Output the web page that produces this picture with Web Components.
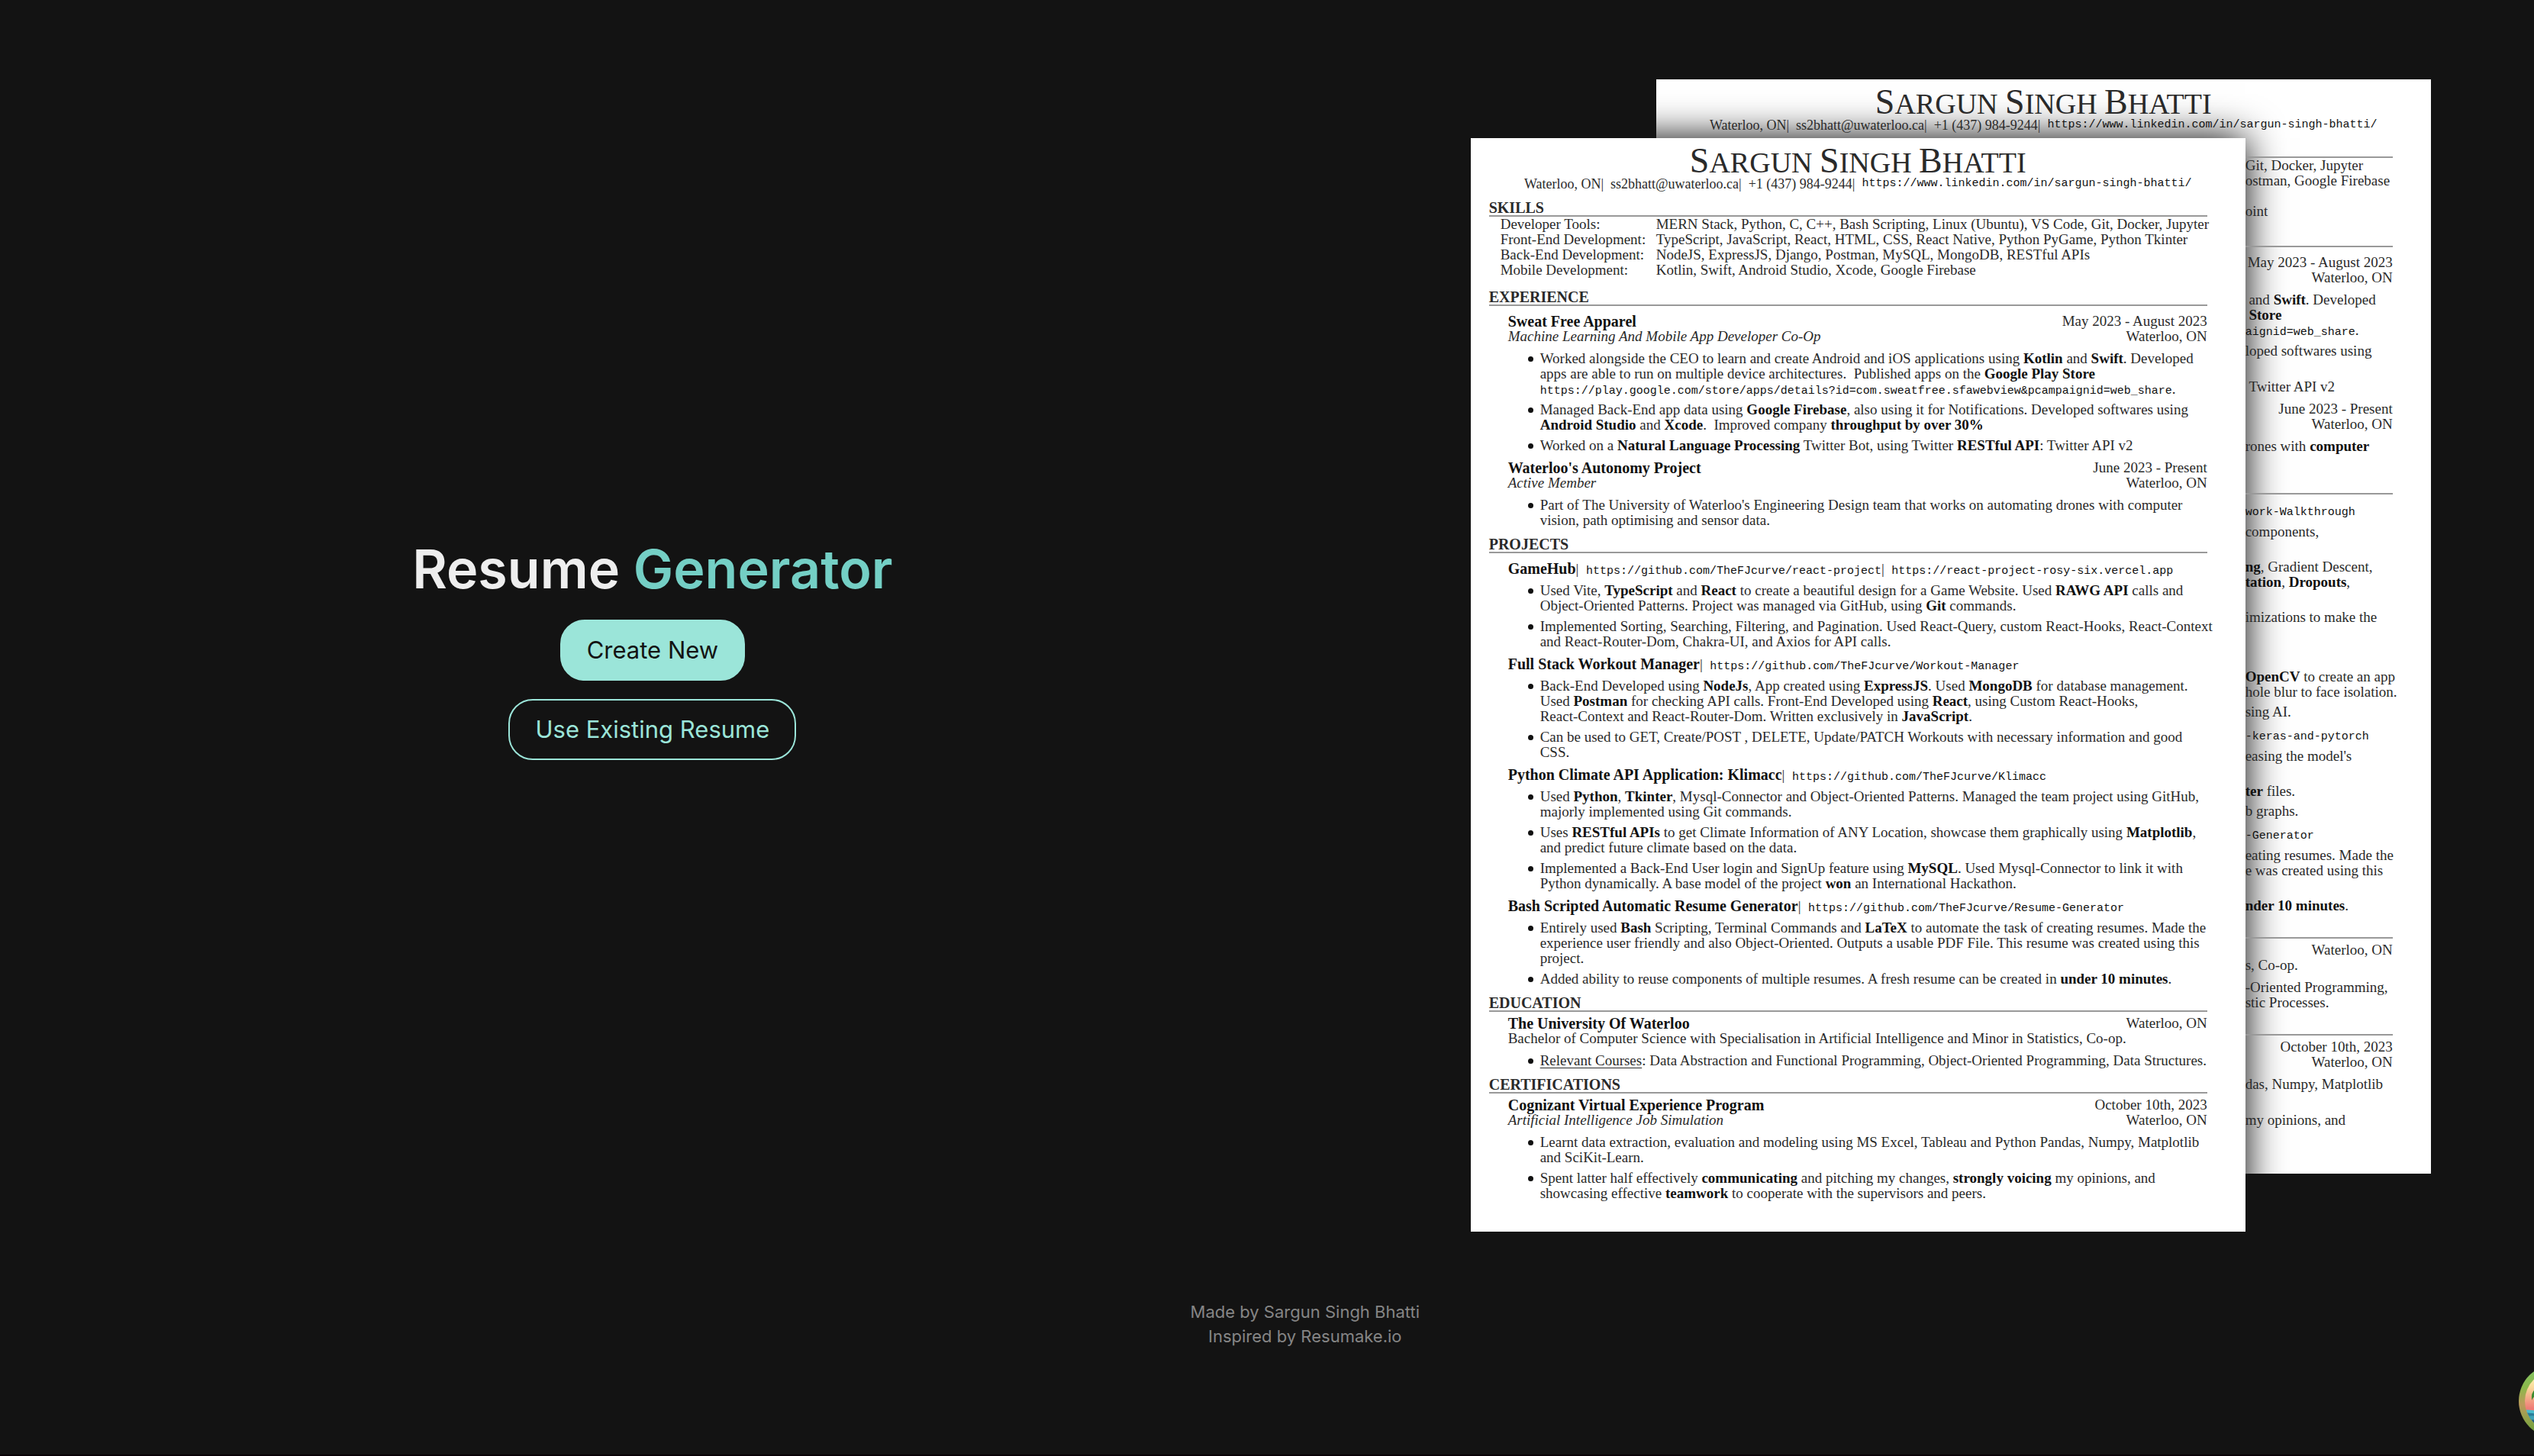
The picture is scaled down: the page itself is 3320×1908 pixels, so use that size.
<!DOCTYPE html>
<html lang="en">
<head>
<meta charset="utf-8">
<title>Resume Generator</title>
<style>
  html, body { margin: 0; height: 100%; background: #131313; }
  body { overflow: hidden; font-family: Inter, "Liberation Sans", sans-serif; }
  resume-sheet a { color: #111; text-decoration: none; font: 15px/1 "Liberation Mono", monospace; }
  resume-sheet u { text-underline-offset: 3px; }
  resume-sheet b { color: #111; }
</style>
</head>
<body>
<landing-page>
  <hero-panel slot="intro" lead="Resume" accent="Generator">
    <pill-button variant="solid">Create New</pill-button>
    <pill-button variant="outline">Use Existing Resume</pill-button>
  </hero-panel>

  <sheet-stack slot="preview">
    <resume-sheet slot="back" class="covered">
      <resume-section>
        <skill-row>Git, Docker, Jupyter</skill-row>
        <skill-row>ostman, Google Firebase</skill-row>
        <skill-row>&nbsp;</skill-row>
        <skill-row>oint</skill-row>
      </resume-section>
      <resume-section roomy>
        <resume-entry><span slot="date">May 2023 - August 2023</span><span slot="place">Waterloo, ON</span>
          <resume-point>&nbsp;and <b>Swift</b>. Developed<br>&nbsp;<b>Store</b><br><a>aignid=web_share</a>.</resume-point>
          <resume-point>loped softwares using<br>&nbsp;</resume-point>
          <resume-point>&nbsp;Twitter API v2</resume-point>
        </resume-entry>
        <resume-entry><span slot="date">June 2023 - Present</span><span slot="place">Waterloo, ON</span>
          <resume-point>rones with <b>computer</b><br>&nbsp;</resume-point>
        </resume-entry>
      </resume-section>
      <resume-section roomy dense>
        <resume-entry single><span slot="title"><a>work-Walkthrough</a></span>
          <resume-point>components,<br>&nbsp;</resume-point>
          <resume-point><b>ng</b>, Gradient Descent,<br><b>tation</b>, <b>Dropouts</b>,<br>&nbsp;</resume-point>
          <resume-point>imizations to make the<br>&nbsp;</resume-point>
        </resume-entry>
        <resume-entry single><span slot="title">&nbsp;</span>
          <resume-point><b>OpenCV</b> to create an app<br>hole blur to face isolation.</resume-point>
          <resume-point>sing AI.</resume-point>
        </resume-entry>
        <resume-entry single><span slot="title"><a>-keras-and-pytorch</a></span>
          <resume-point>easing the model's<br>&nbsp;</resume-point>
          <resume-point><b>ter</b> files.</resume-point>
          <resume-point>b graphs.</resume-point>
        </resume-entry>
        <resume-entry single><span slot="title"><a>-Generator</a></span>
          <resume-point>eating resumes. Made the<br>e was created using this<br>&nbsp;</resume-point>
          <resume-point><b>nder 10 minutes</b>.</resume-point>
        </resume-entry>
      </resume-section>
      <resume-section>
        <resume-entry plain><span slot="date">Waterloo, ON</span><span slot="subtitle">s, Co-op.</span>
          <resume-point>-Oriented Programming,<br>stic Processes.</resume-point>
        </resume-entry>
      </resume-section>
      <resume-section>
        <resume-entry><span slot="date">October 10th, 2023</span><span slot="place">Waterloo, ON</span>
          <resume-point>das, Numpy, Matplotlib<br>&nbsp;</resume-point>
          <resume-point>my opinions, and<br>&nbsp;</resume-point>
        </resume-entry>
      </resume-section>
    </resume-sheet>

    <resume-sheet slot="front">
      <resume-section heading="SKILLS">
        <skill-row label="Developer Tools:">MERN Stack, Python, C, C++, Bash Scripting, Linux (Ubuntu), VS Code, Git, Docker, Jupyter</skill-row>
        <skill-row label="Front-End Development:">TypeScript, JavaScript, React, HTML, CSS, React Native, Python PyGame, Python Tkinter</skill-row>
        <skill-row label="Back-End Development:">NodeJS, ExpressJS, Django, Postman, MySQL, MongoDB, RESTful APIs</skill-row>
        <skill-row label="Mobile Development:">Kotlin, Swift, Android Studio, Xcode, Google Firebase</skill-row>
      </resume-section>
      <resume-section heading="EXPERIENCE" roomy>
        <resume-entry><span slot="title">Sweat Free Apparel</span><span slot="date">May 2023 - August 2023</span><span slot="subtitle">Machine Learning And Mobile App Developer Co-Op</span><span slot="place">Waterloo, ON</span>
          <resume-point>Worked alongside the CEO to learn and create Android and iOS applications using <b>Kotlin</b> and <b>Swift</b>. Developed<br>apps are able to run on multiple device architectures. &nbsp;Published apps on the <b>Google Play Store</b><br><a href="#play">https://play.google.com/store/apps/details?id=com.sweatfree.sfawebview&amp;pcampaignid=web_share</a>.</resume-point>
          <resume-point>Managed Back-End app data using <b>Google Firebase</b>, also using it for Notifications. Developed softwares using<br><b>Android Studio</b> and <b>Xcode</b>. &nbsp;Improved company <b>throughput by over 30%</b></resume-point>
          <resume-point>Worked on a <b>Natural Language Processing</b> Twitter Bot, using Twitter <b>RESTful API</b>: Twitter API v2</resume-point>
        </resume-entry>
        <resume-entry><span slot="title">Waterloo's Autonomy Project</span><span slot="date">June 2023 - Present</span><span slot="subtitle">Active Member</span><span slot="place">Waterloo, ON</span>
          <resume-point>Part of The University of Waterloo's Engineering Design team that works on automating drones with computer<br>vision, path optimising and sensor data.</resume-point>
        </resume-entry>
      </resume-section>
      <resume-section heading="PROJECTS" roomy>
        <resume-entry single><span slot="title">GameHub</span><span slot="links">| &nbsp;<a href="#gamehub">https://github.com/TheFJcurve/react-project</a>| &nbsp;<a href="#gamehub-live">https://react-project-rosy-six.vercel.app</a></span>
          <resume-point>Used Vite, <b>TypeScript</b> and <b>React</b> to create a beautiful design for a Game Website. Used <b>RAWG API</b> calls and<br>Object-Oriented Patterns. Project was managed via GitHub, using <b>Git</b> commands.</resume-point>
          <resume-point>Implemented Sorting, Searching, Filtering, and Pagination. Used React-Query, custom React-Hooks, React-Context<br>and React-Router-Dom, Chakra-UI, and Axios for API calls.</resume-point>
        </resume-entry>
        <resume-entry single><span slot="title">Full Stack Workout Manager</span><span slot="links">| &nbsp;<a href="#workout">https://github.com/TheFJcurve/Workout-Manager</a></span>
          <resume-point>Back-End Developed using <b>NodeJs</b>, App created using <b>ExpressJS</b>. Used <b>MongoDB</b> for database management.<br>Used <b>Postman</b> for checking API calls. Front-End Developed using <b>React</b>, using Custom React-Hooks,<br>React-Context and React-Router-Dom. Written exclusively in <b>JavaScript</b>.</resume-point>
          <resume-point>Can be used to GET, Create/POST , DELETE, Update/PATCH Workouts with necessary information and good<br>CSS.</resume-point>
        </resume-entry>
        <resume-entry single><span slot="title">Python Climate API Application: Klimacc</span><span slot="links">| &nbsp;<a href="#klimacc">https://github.com/TheFJcurve/Klimacc</a></span>
          <resume-point>Used <b>Python</b>, <b>Tkinter</b>, Mysql-Connector and Object-Oriented Patterns. Managed the team project using GitHub,<br>majorly implemented using Git commands.</resume-point>
          <resume-point>Uses <b>RESTful APIs</b> to get Climate Information of ANY Location, showcase them graphically using <b>Matplotlib</b>,<br>and predict future climate based on the data.</resume-point>
          <resume-point>Implemented a Back-End User login and SignUp feature using <b>MySQL</b>. Used Mysql-Connector to link it with<br>Python dynamically. A base model of the project <b>won</b> an International Hackathon.</resume-point>
        </resume-entry>
        <resume-entry single><span slot="title">Bash Scripted Automatic Resume Generator</span><span slot="links">| &nbsp;<a href="#generator">https://github.com/TheFJcurve/Resume-Generator</a></span>
          <resume-point>Entirely used <b>Bash</b> Scripting, Terminal Commands and <b>LaTeX</b> to automate the task of creating resumes. Made the<br>experience user friendly and also Object-Oriented. Outputs a usable PDF File. This resume was created using this<br>project.</resume-point>
          <resume-point>Added ability to reuse components of multiple resumes. A fresh resume can be created in <b>under 10 minutes</b>.</resume-point>
        </resume-entry>
      </resume-section>
      <resume-section heading="EDUCATION">
        <resume-entry plain><span slot="title">The University Of Waterloo</span><span slot="date">Waterloo, ON</span><span slot="subtitle">Bachelor of Computer Science with Specialisation in Artificial Intelligence and Minor in Statistics, Co-op.</span>
          <resume-point><u>Relevant Courses</u>: Data Abstraction and Functional Programming, Object-Oriented Programming, Data Structures.</resume-point>
        </resume-entry>
      </resume-section>
      <resume-section heading="CERTIFICATIONS">
        <resume-entry><span slot="title">Cognizant Virtual Experience Program</span><span slot="date">October 10th, 2023</span><span slot="subtitle">Artificial Intelligence Job Simulation</span><span slot="place">Waterloo, ON</span>
          <resume-point>Learnt data extraction, evaluation and modeling using MS Excel, Tableau and Python Pandas, Numpy, Matplotlib<br>and SciKit-Learn.</resume-point>
          <resume-point>Spent latter half effectively <b>communicating</b> and pitching my changes, <b>strongly voicing</b> my opinions, and<br>showcasing effective <b>teamwork</b> to cooperate with the supervisors and peers.</resume-point>
        </resume-entry>
      </resume-section>
    </resume-sheet>
  </sheet-stack>

  <page-credit slot="credit"></page-credit>
</landing-page>
<island-badge></island-badge>

<script>
  const define = (name, html) => customElements.define(name, class extends HTMLElement {
    constructor() {
      super();
      this.attachShadow({ mode: 'open' });
    }
    connectedCallback() {
      this.shadowRoot.innerHTML = typeof html === 'function' ? html(this) : html;
    }
  });

  // The canvas runs slightly wider than the window, so both columns sit right of its middle.
  define('landing-page', `
    <style>
      :host { display: block; box-sizing: border-box; width: 103%; min-height: 100vh; border-bottom: 2px solid #080206; color: #eee; }
      main { display: grid; grid-template-columns: 1fr 1fr; align-items: center; padding-top: 104px; }
      .preview { display: flex; justify-content: center; padding-right: 18px; }
      footer { margin-top: 88px; }
    </style>
    <main>
      <slot name="intro"></slot>
      <div class="preview"><slot name="preview"></slot></div>
    </main>
    <footer><slot name="credit"></slot></footer>`);

  define('hero-panel', el => `
    <style>
      :host { display: flex; flex-direction: column; align-items: center; gap: 24px; padding-bottom: 12px; }
      h1 { margin: 0 0 8px; font-size: 70px; line-height: 68px; font-weight: 600; color: #eeeeee; white-space: nowrap; }
      span { color: #74cfc5; }
    </style>
    <h1>${el.getAttribute('lead')} <span>${el.getAttribute('accent')}</span></h1>
    <slot></slot>`);

  define('pill-button', `
    <style>
      :host { display: block; }
      button { display: block; height: 80px; padding: 0 33px; border: 2px solid #9be5d9; border-radius: 32px;
        font: 400 31px/40px Inter, "Liberation Sans", sans-serif; white-space: nowrap; cursor: pointer; }
      :host([variant=solid]) button { background: #9be5d9; color: #131313; }
      :host([variant=outline]) button { background: transparent; color: #9be5d9; }
    </style>
    <button type="button"><slot></slot></button>`);

  define('sheet-stack', `
    <style>
      :host { display: grid; --shift-x: 243px; --shift-y: 77px; }
      slot { display: block; grid-area: 1 / 1; }
      slot[name=back] { padding: 0 0 var(--shift-y) var(--shift-x); }
      slot[name=front] { padding: var(--shift-y) var(--shift-x) 0 0; z-index: 1; }
    </style>
    <slot name="back"></slot><slot name="front"></slot>`);

  // A covered sheet carries the shade cast on it by the sheet above, so none falls on the page.
  define('resume-sheet', `
    <style>
      :host { display: block; box-sizing: border-box; width: 1015px; padding: 10px 50px 40px 24px; background: #fff; color: #2a2a2a;
        font: 19px/20px "Liberation Serif", serif; white-space: nowrap; --indent: 25px; --point: 42px; --dot: block; --label: 204px; }
      :host(.covered) { position: relative; isolation: isolate; overflow: hidden;
        --indent: 0px; --point: 0px; --dot: none; --label: 0px; --cover: 748px; }
      :host(.covered)::before { content: ""; position: absolute; z-index: -1; top: var(--shift-y); left: calc(0px - var(--shift-x));
        width: 100%; height: 100%; box-shadow: 0 0 48px #000; }
      h2 { margin: 0; height: 40px; padding-left: 26px; text-align: center; font-size: 38px; line-height: 40px; font-weight: 400; }
      h2 span { font-size: 46px; line-height: 40px; }
      p { display: flex; justify-content: center; margin: 0; height: 20px; padding-left: 26px; font-size: 18px; white-space: pre; }
      a { font: 15px/20px "Liberation Mono", monospace; color: #111; text-decoration: none; }
    </style>
    <header>
      <h2><span>S</span>ARGUN <span>S</span>INGH <span>B</span>HATTI</h2>
      <p>Waterloo, ON|&nbsp; ss2bhatt@uwaterloo.ca|&nbsp; +1 (437) 984-9244|&nbsp; <a href="https://www.linkedin.com/in/sargun-singh-bhatti/">https://www.linkedin.com/in/sargun-singh-bhatti/</a></p>
    </header>
    <slot></slot>`);

  define('resume-section', el => `
    <style>
      :host { display: block; padding-top: 11px; --point-gap: 7px; }
      :host([dense]) { --point-gap: 6px; }
      h3 { margin: 0 0 5px; height: 20px; border-bottom: 2px solid #999; font-size: 20px; line-height: 20px; font-weight: 700; }
      :host([roomy]) h3 { margin-bottom: 10px; }
      h3.tight { margin-bottom: 0; }
      .body { display: flex; flex-direction: column; gap: 9px; padding-left: var(--cover, 0px); }
      .body.tight { gap: 0; padding-bottom: 4px; }
    </style>
    <h3 class="${el.querySelector('skill-row') ? 'tight' : ''}">${el.getAttribute('heading') || ''}</h3>
    <div class="body ${el.querySelector('skill-row') ? 'tight' : ''}"><slot></slot></div>`);

  define('skill-row', el => `
    <style>
      :host { display: flex; height: 20px; }
      span { flex: none; box-sizing: border-box; width: calc(var(--label) + 15px); padding-left: 15px; }
      span:empty { display: none; }
    </style>
    <span>${el.getAttribute('label') || ''}</span><div><slot></slot></div>`);

  define('resume-entry', `
    <style>
      :host { display: block; padding-left: var(--indent); }
      .row { display: flex; justify-content: space-between; height: 20px; }
      .title { font-size: 20px; font-weight: 700; color: #111; }
      .subtitle { font-style: italic; }
      :host([plain]) .subtitle { font-style: normal; }
      :host([single]) .second { display: none; }
      .points { display: flex; flex-direction: column; gap: var(--point-gap); margin-top: 9px; }
    </style>
    <div class="row"><div><span class="title"><slot name="title"></slot></span><slot name="links"></slot></div><slot name="date"></slot></div>
    <div class="row second"><span class="subtitle"><slot name="subtitle"></slot></span><slot name="place"></slot></div>
    <div class="points" role="list"><slot></slot></div>`);

  define('resume-point', `
    <style>
      :host { display: flex; align-items: flex-start; }
      i { display: flex; flex: none; justify-content: center; align-items: center; width: var(--point); height: 20px; }
      i::before { content: ""; display: var(--dot); width: 7px; height: 7px; margin-left: 18px; border-radius: 50%; background: #111; }
    </style>
    <i></i><div role="listitem"><slot></slot></div>`);

  define('page-credit', `
    <style>
      :host { display: block; text-align: center; font-size: 22px; line-height: 32px; color: #858585; }
      p { margin: 0; }
    </style>
    <p>Made by Sargun Singh Bhatti</p>
    <p>Inspired by Resumake.io</p>`);

  // Round floating badge, partly past the right edge of the window.
  define('island-badge', `
    <style>
      :host { position: fixed; right: -76px; bottom: 24px; width: 96px; height: 96px; }
      svg { display: block; width: 96px; height: 96px; }
    </style>
    <svg viewBox="0 0 96 96" aria-hidden="true">
      <defs>
        <linearGradient id="ring" x1="0" y1="0" x2="0" y2="1"><stop offset="0" stop-color="#7fc56b"/><stop offset=".32" stop-color="#8cb84a"/><stop offset=".55" stop-color="#bd9a5c"/><stop offset=".8" stop-color="#86a245"/><stop offset="1" stop-color="#5a9a34"/></linearGradient>
        <linearGradient id="sky" x1="0" y1="0" x2="0" y2="1"><stop offset=".15" stop-color="#fbf7b4"/><stop offset=".32" stop-color="#f9d79a"/><stop offset=".6" stop-color="#ef7c77"/></linearGradient>
        <clipPath id="disc"><circle cx="48" cy="48" r="40"/></clipPath>
      </defs>
      <circle cx="48" cy="48" r="48" fill="url(#ring)"/>
      <g clip-path="url(#disc)">
        <rect width="96" height="96" fill="url(#sky)"/>
        <path d="M0 61q12-3 24 0t24 0 24 0 24 0v35H0z" fill="#4bbccb"/>
        <path d="M0 65q12-3 24 0t24 0 24 0 24 0v30H0z" fill="#2b7d99"/>
        <path d="M8 69q8-3 16-1t20 0v3q-18 2-36 1z" fill="#3ea3b5"/>
        <path d="M0 74q12-3 24 0t24 0 24 0 24 0v22H0z" fill="#1f5876"/>
        <path d="M17 47q-1-10 4-14l27-7 24 8q6 6 6 14-8-10-18-10l-10 4-4 19h-6l2-18-14-4q-8 1-11 8z" fill="#3d8b2f"/>
      </g>
    </svg>`);
</script>
</body>
</html>
